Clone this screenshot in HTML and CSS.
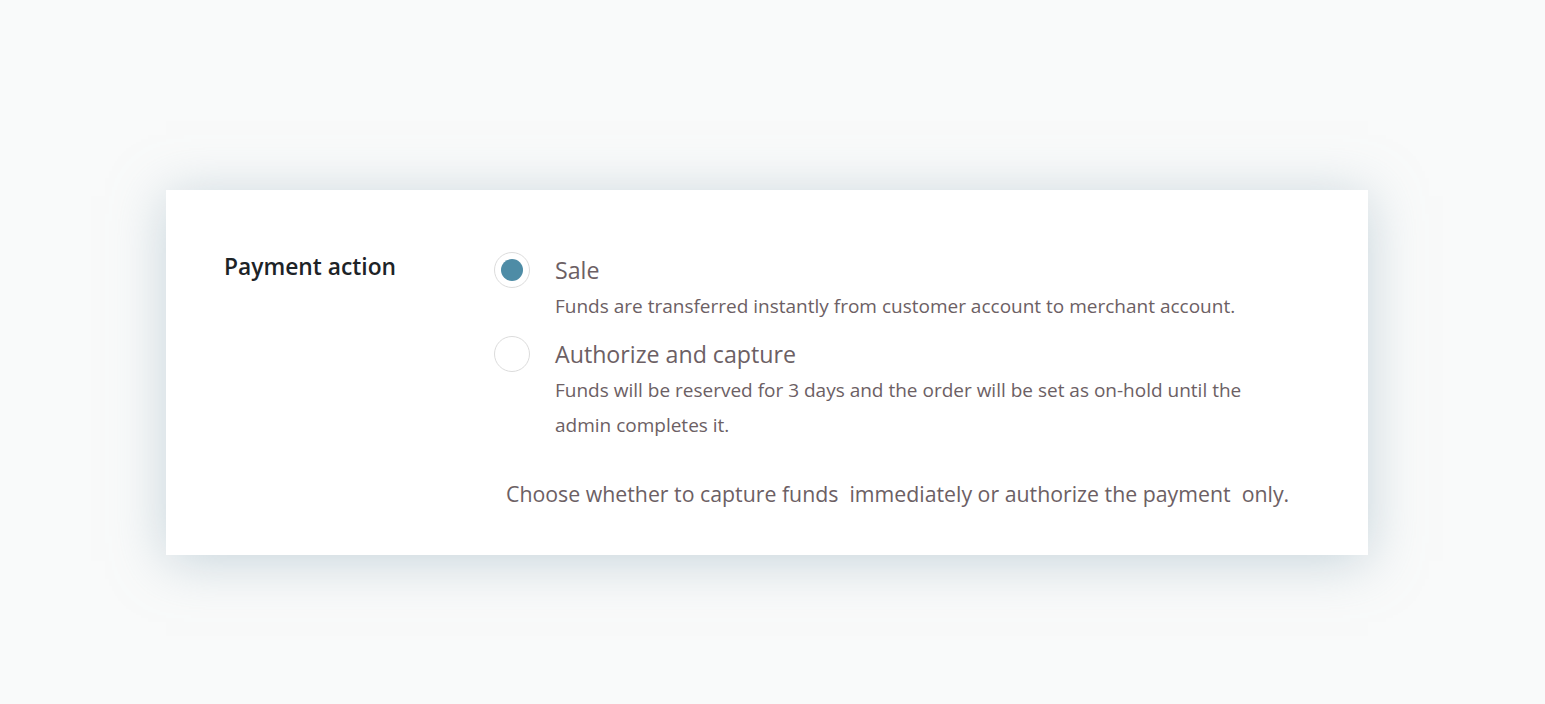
FILE: index.html
```html
<!DOCTYPE html>
<html>
<head>
<meta charset="utf-8">
<link rel="stylesheet" href="styles.css">
</head>
<body>
<div class="page">
  <section class="card">
    <div class="label">Payment action</div>
    <div class="field">
      <div class="options">
        <label class="option">
          <span class="radio checked"><span class="dot"></span></span>
          <span class="text">
            <span class="title">Sale</span>
            <span class="desc">Funds are transferred instantly from customer account to merchant account.</span>
          </span>
        </label>
        <label class="option">
          <span class="radio"></span>
          <span class="text">
            <span class="title">Authorize and capture</span>
            <span class="desc">Funds will be reserved for 3 days and the order will be set as on-hold until the admin completes it.</span>
          </span>
        </label>
      </div>
      <p class="help">Choose whether to capture funds&nbsp; immediately or authorize the payment&nbsp; only.</p>
    </div>
  </section>
</div>
</body>
</html>
```

FILE: styles.css
```css
html, body {
  margin: 0;
  padding: 0;
  background: #f9fafa;
}
body {
  font-family: "Open Sans", "Noto Sans", sans-serif;
}
.page {
  min-height: 704px;
  box-sizing: border-box;
  padding: 190px 0 0 166px;
}
.card {
  width: 1202px;
  height: 365px;
  box-sizing: border-box;
  background: #ffffff;
  box-shadow: 0 6px 50px rgba(150, 175, 190, 0.5);
  display: flex;
  padding: 62px 0 0 58px;
}
.label {
  width: 270px;
  flex: none;
  font-size: 22.8px;
  font-weight: 600;
  color: #1d2327;
  line-height: 30px;
}
.field {
  display: flex;
  flex-direction: column;
}
.options {
  display: flex;
  flex-direction: column;
  gap: 12px;
}
.option {
  display: flex;
  gap: 25px;
}
.radio {
  width: 36px;
  height: 36px;
  box-sizing: border-box;
  border: 1px solid #dcdcdc;
  border-radius: 50%;
  flex: none;
  display: flex;
  align-items: center;
  justify-content: center;
}
.dot {
  width: 22px;
  height: 22px;
  border-radius: 50%;
  background: #4e8ca6;
}
.text {
  display: flex;
  flex-direction: column;
  width: 720px;
}
.title {
  font-size: 23.2px;
  line-height: 36px;
  color: #6c6064;
}
.desc {
  font-size: 19px;
  line-height: 35px;
  color: #6c6064;
  margin-top: 1px;
}
.help {
  margin: 36px 0 0 12px;
  font-size: 21.3px;
  line-height: 30px;
  color: #6c6064;
}
```
